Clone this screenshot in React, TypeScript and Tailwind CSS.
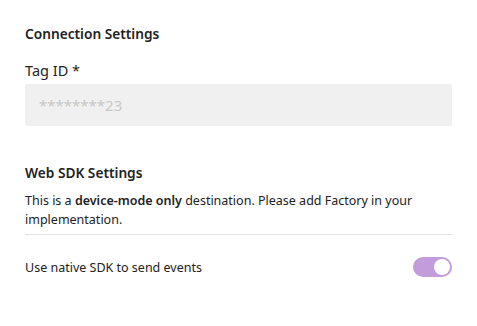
import React from "react";

export default function App() {
  return (
    <div
      className="w-[477px] h-[326px] bg-white px-[25px] pt-[24px] text-[#222222]"
      style={{ fontFamily: '"Noto Sans", "Open Sans", sans-serif' }}
    >
      <h2 className="text-[13.7px] font-semibold leading-[20px]">Connection Settings</h2>
      <div className="mt-[16px] text-[14.5px] leading-[20px]">Tag ID *</div>
      <div className="mt-[4px] h-[42px] w-[427px] bg-[#f0f0f0] rounded-[2px] flex items-center pl-[14px] text-[15px] text-[#c8c8c8]">
        ********23
      </div>
      <h2 className="mt-[37px] text-[13.7px] font-semibold leading-[20px]">Web SDK Settings</h2>
      <p className="mt-[8px] text-[12.5px] leading-[19px] w-[427px]">
        This is a <span className="font-semibold">device-mode only</span> destination. Please add Factory in your implementation.
      </p>
      <div className="mt-[5px] h-px w-[427px] bg-[#e2e2e2]" />
      <div className="mt-[22px] w-[427px] flex items-center justify-between">
        <span className="text-[12.5px] leading-[19px]">Use native SDK to send events</span>
        <div className="w-[39px] h-[20px] rounded-full bg-[#c39ddb] flex items-center justify-end pr-[2px]">
          <div className="w-[16px] h-[16px] rounded-full bg-white" />
        </div>
      </div>
    </div>
  );
}
